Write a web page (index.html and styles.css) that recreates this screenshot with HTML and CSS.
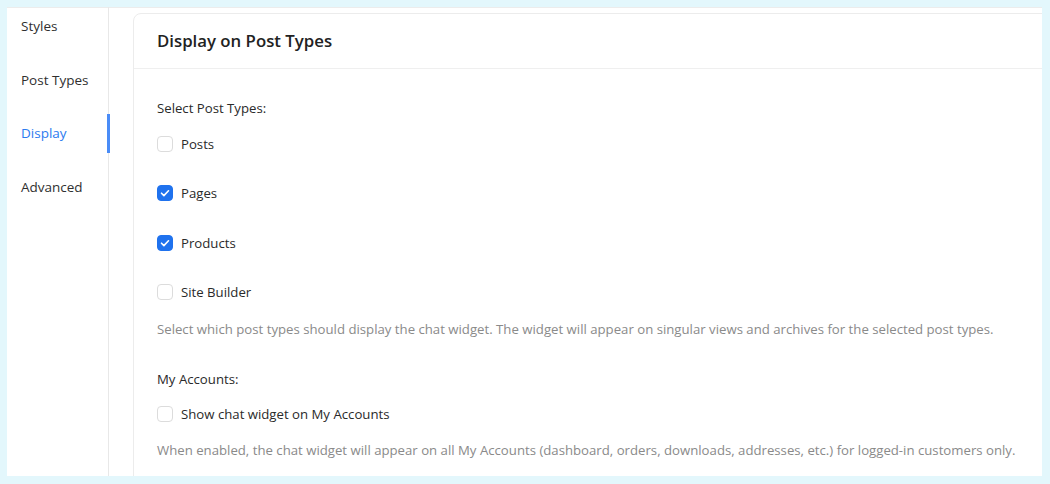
FILE: index.html
```html
<!DOCTYPE html>
<html>
<head>
<meta charset="utf-8">
<link rel="stylesheet" href="styles.css">
</head>
<body>
<div class="panel">
  <nav class="sidebar">
    <div class="nav-item">Styles</div>
    <div class="nav-item">Post Types</div>
    <div class="nav-item active">Display</div>
    <div class="nav-item">Advanced</div>
  </nav>
  <main class="main">
    <section class="card">
      <header class="card-header">Display on Post Types</header>
      <div class="card-body">
        <div class="field-label">Select Post Types:</div>
        <label class="check first"><span class="box"></span>Posts</label>
        <label class="check"><span class="box checked"><svg viewBox="0 0 16 16" width="16" height="16"><path d="M4.5 8.2l2.4 2.4 4.6-4.8" fill="none" stroke="#fff" stroke-width="1.6" stroke-linecap="round" stroke-linejoin="round"/></svg></span>Pages</label>
        <label class="check"><span class="box checked"><svg viewBox="0 0 16 16" width="16" height="16"><path d="M4.5 8.2l2.4 2.4 4.6-4.8" fill="none" stroke="#fff" stroke-width="1.6" stroke-linecap="round" stroke-linejoin="round"/></svg></span>Products</label>
        <label class="check"><span class="box"></span>Site Builder</label>
        <p class="help">Select which post types should display the chat widget. The widget will appear on singular views and archives for the selected post types.</p>
        <div class="field-label section">My Accounts:</div>
        <label class="check tight"><span class="box"></span>Show chat widget on My Accounts</label>
        <p class="help">When enabled, the chat widget will appear on all My Accounts (dashboard, orders, downloads, addresses, etc.) for logged-in customers only.</p>
      </div>
    </section>
  </main>
</div>
</body>
</html>
```
FILE: styles.css
```css
* { box-sizing: border-box; }
html, body { margin: 0; padding: 0; }
body {
  background: #e3f7fc;
  padding: 7px 8px 8px 7px;
  font-family: "Open Sans", "Noto Sans", sans-serif;
  font-size: 13.2px;
  color: #2a2a2a;
}
.panel {
  display: flex;
  height: 469px;
  background: #fff;
  box-shadow: inset 0 1px 0 #ececec;
  overflow: hidden;
}
.sidebar {
  width: 102px;
  flex: none;
  border-right: 1px solid #e8e8e8;
  display: flex;
  flex-direction: column;
  gap: 14.5px;
}
.nav-item {
  position: relative;
  height: 39px;
  line-height: 39px;
  padding-left: 14px;
  color: #2f2f2f;
  font-size: 13.5px;
}
.nav-item.active { color: #2b7bef; }
.nav-item.active::after {
  content: "";
  position: absolute;
  right: -2px;
  top: 0;
  width: 3px;
  height: 39px;
  background: #4a8cf7;
}
.main {
  flex: 1;
  padding: 6px 0 0 24px;
  overflow: hidden;
}
.card {
  margin-right: -30px;
  height: 500px;
  border: 1px solid #ececec;
  border-radius: 8px;
}
.card-header {
  height: 55px;
  line-height: 54px;
  padding: 0 23px;
  border-bottom: 1px solid #efefef;
  font-size: 16.8px;
  font-weight: 600;
  color: #222;
}
.card-body {
  padding: 29px 23px 0 23px;
}
.field-label {
  line-height: 20px;
  color: #2a2a2a;
}
.field-label.section { margin-top: 30px; }
.check {
  display: flex;
  align-items: center;
  gap: 8px;
  line-height: 20px;
  margin-top: 29.4px;
  color: #2a2a2a;
}
.check.first { margin-top: 16px; }
.check.tight { margin-top: 15px; }
.box {
  width: 16px;
  height: 16px;
  border: 1px solid #dcdcdc;
  border-radius: 4px;
  background: #fff;
  flex: none;
  display: flex;
}
.box.checked {
  background: #1f72ee;
  border-color: #1f72ee;
}
.box svg { margin: -1px; }
.help {
  margin: 16.5px 0 0 0;
  line-height: 20px;
  color: #8a8a8a;
}
```
